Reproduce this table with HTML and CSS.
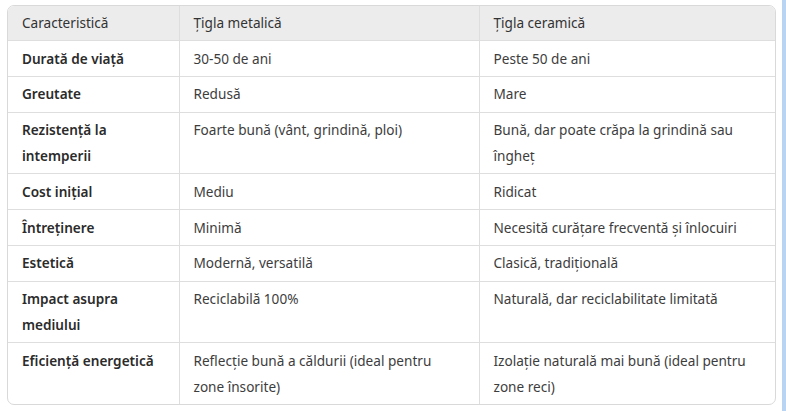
FILE: index.html
```html
<!DOCTYPE html>
<html lang="ro">
<head>
<meta charset="utf-8">
<title>Comparație țiglă</title>
<link rel="stylesheet" href="styles.css">
</head>
<body>
<div class="page">
  <main class="content">
    <div class="table-wrap">
      <table class="cmp">
        <colgroup>
          <col class="c1"><col class="c2"><col class="c3">
        </colgroup>
        <thead>
          <tr><th>Caracteristică</th><th>Țigla metalică</th><th>Țigla ceramică</th></tr>
        </thead>
        <tbody>
          <tr><td class="k">Durată de viață</td><td>30-50 de ani</td><td>Peste 50 de ani</td></tr>
          <tr><td class="k">Greutate</td><td>Redusă</td><td>Mare</td></tr>
          <tr><td class="k">Rezistență la intemperii</td><td>Foarte bună (vânt, grindină, ploi)</td><td>Bună, dar poate crăpa la grindină sau îngheț</td></tr>
          <tr><td class="k">Cost inițial</td><td>Mediu</td><td>Ridicat</td></tr>
          <tr><td class="k">Întreținere</td><td>Minimă</td><td>Necesită curățare frecventă și înlocuiri</td></tr>
          <tr><td class="k">Estetică</td><td>Modernă, versatilă</td><td>Clasică, tradițională</td></tr>
          <tr><td class="k">Impact asupra mediului</td><td>Reciclabilă 100%</td><td>Naturală, dar reciclabilitate limitată</td></tr>
          <tr><td class="k">Eficiență energetică</td><td>Reflecție bună a căldurii (ideal pentru zone însorite)</td><td>Izolație naturală mai bună (ideal pentru zone reci)</td></tr>
        </tbody>
      </table>
    </div>
  </main>
  <aside class="edge"></aside>
</div>
</body>
</html>
```

FILE: styles.css
```css
html, body {
  margin: 0;
  padding: 0;
  background: #ffffff;
}
body {
  font-family: "Noto Sans", "Open Sans", sans-serif;
  font-size: 13.6px;
  color: #3d3d3d;
}
.page {
  display: flex;
  width: 786px;
  height: 411px;
}
.content {
  flex: 1;
  padding: 5px 0 0 7px;
}
.edge {
  width: 4px;
  background: #b9d4f3;
}
.table-wrap {
  width: 769px;
  border: 1px solid #d9d9d9;
  border-radius: 7px;
  overflow: hidden;
  box-sizing: border-box;
}
.cmp {
  width: 100%;
  border-collapse: collapse;
  table-layout: fixed;
}
.c1 { width: 171px; }
.c2 { width: 300px; }
.c3 { width: auto; }
.cmp th,
.cmp td {
  text-align: left;
  vertical-align: top;
  padding: 4.5px 14px 4.25px;
  line-height: 26px;
  border-right: 1px solid #dedede;
  border-bottom: 1px solid #dedede;
}
.cmp th:last-child,
.cmp td:last-child {
  border-right: none;
}
.cmp tbody tr:last-child td {
  border-bottom: none;
}
.cmp th {
  background: #ececec;
  font-weight: normal;
  color: #333;
  padding-top: 4px;
  padding-bottom: 4px;
}
.cmp td.k {
  font-weight: 600;
  color: #2b2b2b;
}
```
